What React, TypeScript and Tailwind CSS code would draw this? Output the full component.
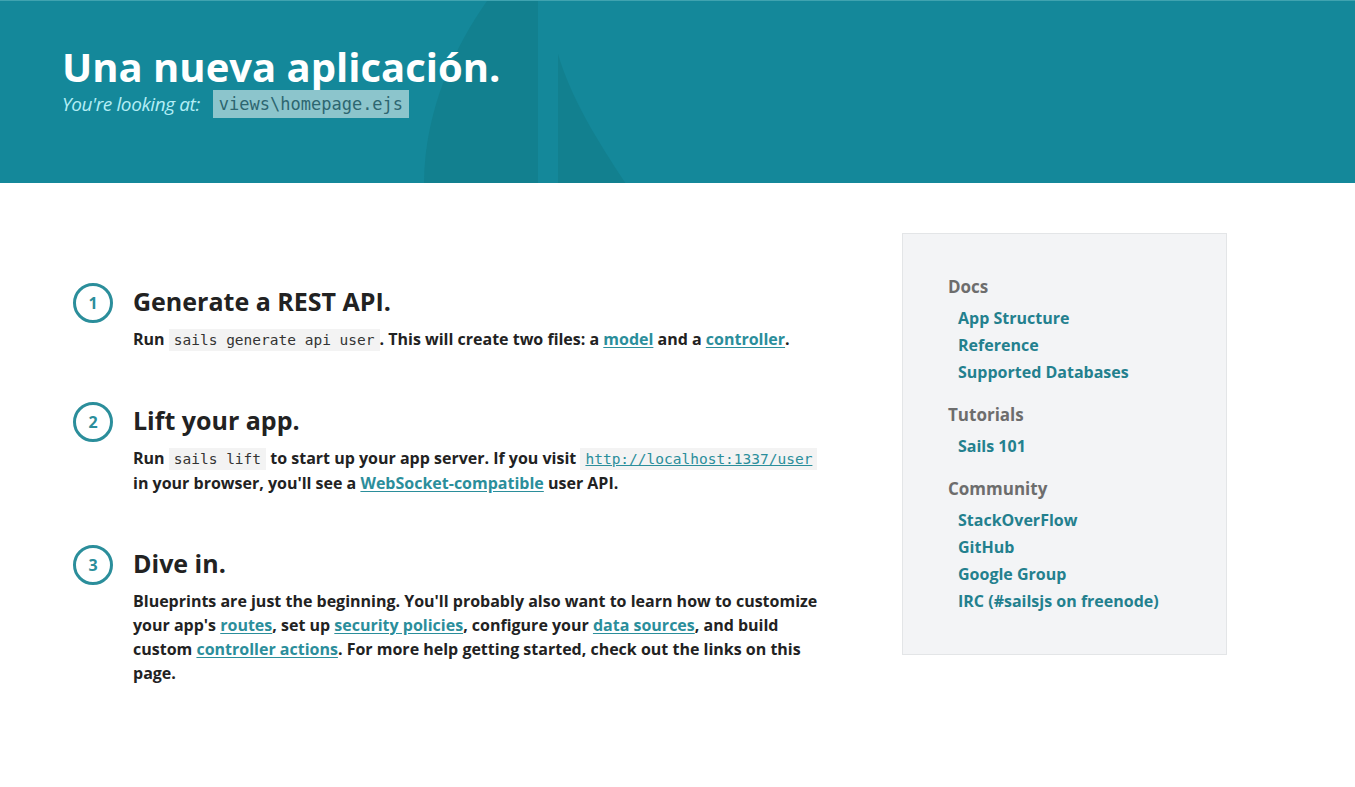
const sidebar = [
  { title: "Docs", links: ["App Structure", "Reference", "Supported Databases"] },
  { title: "Tutorials", links: ["Sails 101"] },
  { title: "Community", links: ["StackOverFlow", "GitHub", "Google Group", "IRC (#sailsjs on freenode)"] },
]

function Code({ children }: { children: React.ReactNode }) {
  return (
    <code className="bg-[#f3f3f3] px-[5px] py-[3px] font-['DejaVu_Sans_Mono',monospace] text-[14.5px] font-normal text-[#333]">
      {children}
    </code>
  )
}

function A({ children }: { children: React.ReactNode }) {
  return <a className="text-[#2b8e9b] underline underline-offset-2">{children}</a>
}

function Step({ n, title, children }: { n: number; title: string; children: React.ReactNode }) {
  return (
    <div className="flex items-start gap-[20px]">
      <div className="flex h-10 w-10 shrink-0 items-center justify-center rounded-full border-[3px] border-[#2b8e9b] text-[16px] font-bold text-[#2b8e9b]">
        {n}
      </div>
      <div className="w-[690px]">
        <h2 className="text-[25px] leading-[36px] font-bold text-[#222]">{title}</h2>
        <p className="mt-2 text-[16px] leading-[24px] font-bold text-[#222]">{children}</p>
      </div>
    </div>
  )
}

export default function App() {
  return (
    <div className="min-h-[787px] bg-white font-['Open_Sans',sans-serif]">
      <header className="relative h-[183px] overflow-hidden border-t border-[#3fa3b0] bg-[#14889a]">
        <svg className="absolute inset-0" width="1355" height="183" viewBox="0 0 1355 183">
          <path d="M538 0 L487 0 C455 45 424 110 424 183 L538 183 Z" fill="#12808f" />
          <path d="M558 53 L558 183 L626 183 C598 140 572 100 558 53 Z" fill="#12808f" />
        </svg>
        <div className="relative pt-[41px] pl-[62px]">
          <h1 className="text-[40px] leading-[50px] font-bold text-white">Una nueva aplicación.</h1>
          <div className="-mt-[2px] flex items-center gap-[13px]">
            <span className="text-[19px] tracking-[-0.4px] italic text-[#b3eef6]">You're looking at:</span>
            <span className="bg-[#8cc5cc] px-[6px] py-[1px] font-['DejaVu_Sans_Mono',monospace] text-[17px] leading-[26px] text-[#2d6670]">
              views\homepage.ejs
            </span>
          </div>
        </div>
      </header>

      <main className="flex pt-[50px] pr-[128px] pl-[73px]">
        <div className="flex flex-col gap-[50px] pt-[50px]">
          <Step n={1} title="Generate a REST API.">
            Run <Code>sails generate api user</Code>. This will create two files: a <A>model</A> and a{" "}
            <A>controller</A>.
          </Step>
          <Step n={2} title="Lift your app.">
            Run <Code>sails lift</Code> to start up your app server. If you visit{" "}
            <Code>
              <span className="text-[#2b8e9b] underline">http://localhost:1337/user</span>
            </Code>{" "}
            in your browser, you'll see a <A>WebSocket-compatible</A> user API.
          </Step>
          <Step n={3} title="Dive in.">
            Blueprints are just the beginning. You'll probably also want to learn how to customize your app's{" "}
            <A>routes</A>, set up <A>security policies</A>, configure your <A>data sources</A>, and build custom{" "}
            <A>controller actions</A>. For more help getting started, check out the links on this page.
          </Step>
        </div>

        <aside className="ml-auto h-[422px] w-[325px] border border-[#e3e5e7] bg-[#f3f4f6] pt-[41px] pl-[45px]">
          {sidebar.map((group, i) => (
            <div key={group.title} className={i > 0 ? "mt-[17px]" : ""}>
              <h3 className="mb-[6px] text-[17px] leading-[24px] font-bold text-[#6d6d6d]">{group.title}</h3>
              <ul className="pl-[10px]">
                {group.links.map((l) => (
                  <li key={l} className="text-[16px] leading-[27px] font-bold text-[#23808e]">
                    {l}
                  </li>
                ))}
              </ul>
            </div>
          ))}
        </aside>
      </main>
    </div>
  )
}
